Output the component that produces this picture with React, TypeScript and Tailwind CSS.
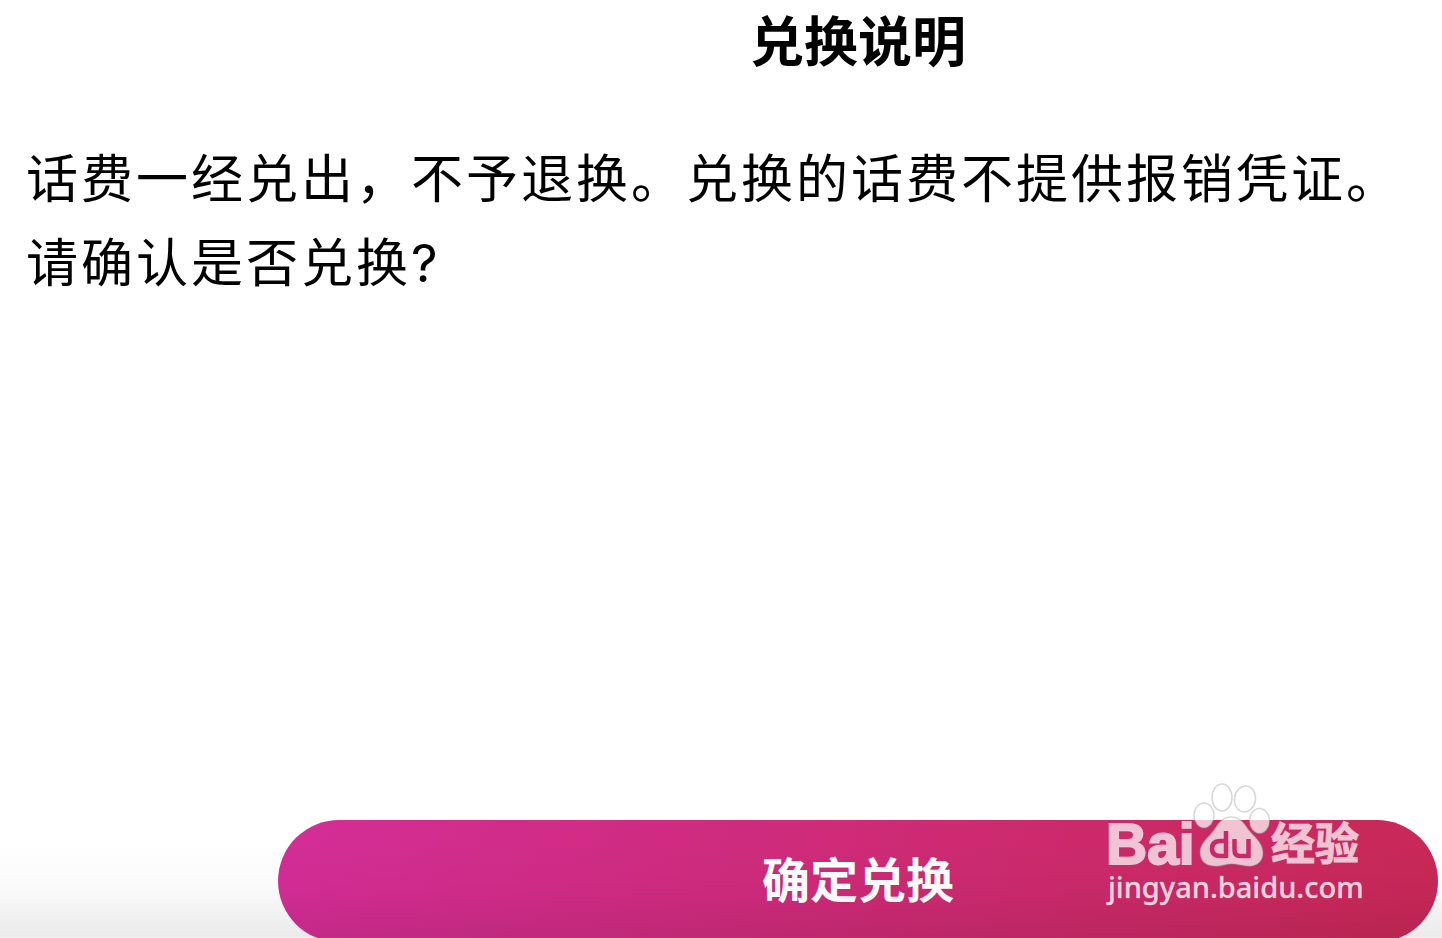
import { FunctionComponent } from "react";

interface IExchangeNoticeProps {
  title: string;
  lines: string[];
}

interface IConfirmButtonProps {
  label: string;
}

export default function App() {
  return (
    <div className="relative flex flex-col h-screen overflow-hidden bg-white text-black font-['Noto_Sans_CJK_SC',sans-serif]">
      <ExchangeNotice
        title="兑换说明"
        lines={[
          "话费一经兑出，不予退换。兑换的话费不提供报销凭证。",
          "请确认是否兑换?",
        ]}
      />
      {/* the button runs a little below the fold */}
      <footer className="-mb-1 pl-[278px] pr-1">
        <ConfirmButton label="确定兑换" />
      </footer>
      {/* bottom shade */}
      <div className="absolute inset-x-0 bottom-0 h-24 pointer-events-none border-b border-black/5 bg-linear-to-b from-transparent via-black/2 to-black/8" />
      <Watermark />
    </div>
  );
}

const ExchangeNotice: FunctionComponent<IExchangeNoticeProps> = ({
  title,
  lines,
}) => {
  return (
    <main className="flex-1">
      <h1 className="pl-[278px] pr-1 text-center text-[54px] leading-[78px] font-bold">
        {title}
      </h1>
      <div className="mt-[60px] pl-[26px] text-[52px] leading-[84px] tracking-[3px] font-[Inter,'Noto_Sans_CJK_SC',sans-serif]">
        {lines.map((line) => (
          <p key={line}>{line}</p>
        ))}
      </div>
    </main>
  );
};

const ConfirmButton: FunctionComponent<IConfirmButtonProps> = ({ label }) => {
  return (
    <button
      type="button"
      className="block w-full h-[122px] pb-2 rounded-full text-center text-white text-5xl font-bold bg-linear-[105deg] from-[#d42d97] to-[#c82856] hover:cursor-pointer"
    >
      {label}
    </button>
  );
};

const Watermark = () => {
  return (
    <svg
      viewBox="0 0 270 130"
      className="absolute right-[72px] bottom-[28px] w-[270px] h-[130px] pointer-events-none"
    >
      <g fill="#fff" stroke="#fff" opacity="0.72">
        <text
          x="6"
          y="84"
          fontSize="57"
          fontWeight="700"
          fontFamily="Liberation Sans, sans-serif"
          strokeWidth="2"
        >
          Bai
        </text>
        <text
          x="171"
          y="80"
          fontSize="44"
          fontWeight="700"
          fontFamily="Noto Sans CJK SC, sans-serif"
          strokeWidth="1"
        >
          经验
        </text>
      </g>
      {/* paw */}
      <g
        fill="#fff"
        fillOpacity="0.72"
        stroke="#8c8c8c"
        strokeOpacity="0.35"
        strokeWidth="1.5"
      >
        <ellipse cx="104" cy="35.5" rx="10" ry="12.5" />
        <ellipse cx="122" cy="17.5" rx="10" ry="13.5" />
        <ellipse cx="145" cy="19" rx="10.5" ry="13" transform="rotate(8 145 19)" />
        <ellipse cx="159.5" cy="41" rx="10" ry="12.5" />
        <path d="M131 37C140 37 144 43 148 49C153 56 163 62 163 73C163 82 156 87 147 86C140 85 136 84 131 84C126 84 121 87 114 86C106 86 100 81 100 72C100 63 109 57 114 50C118 44 122 37 131 37Z" />
      </g>
      <g fill="none" stroke="#c82a67" strokeWidth="4.5">
        <path d="M126 51V78M126 61H121Q112 61 112 68.5Q112 76 121 76H126" />
        <path d="M134.5 59V70Q134.5 76 140 76H148.5M148.5 59V78" />
      </g>
      <text
        x="8"
        y="118"
        fontSize="29"
        fontWeight="500"
        fontFamily="Noto Sans, sans-serif"
        fill="#fff"
        fillOpacity="0.8"
        stroke="#fff"
        strokeOpacity="0.4"
        strokeWidth="0.5"
      >
        jingyan.baidu.com
      </text>
    </svg>
  );
};
